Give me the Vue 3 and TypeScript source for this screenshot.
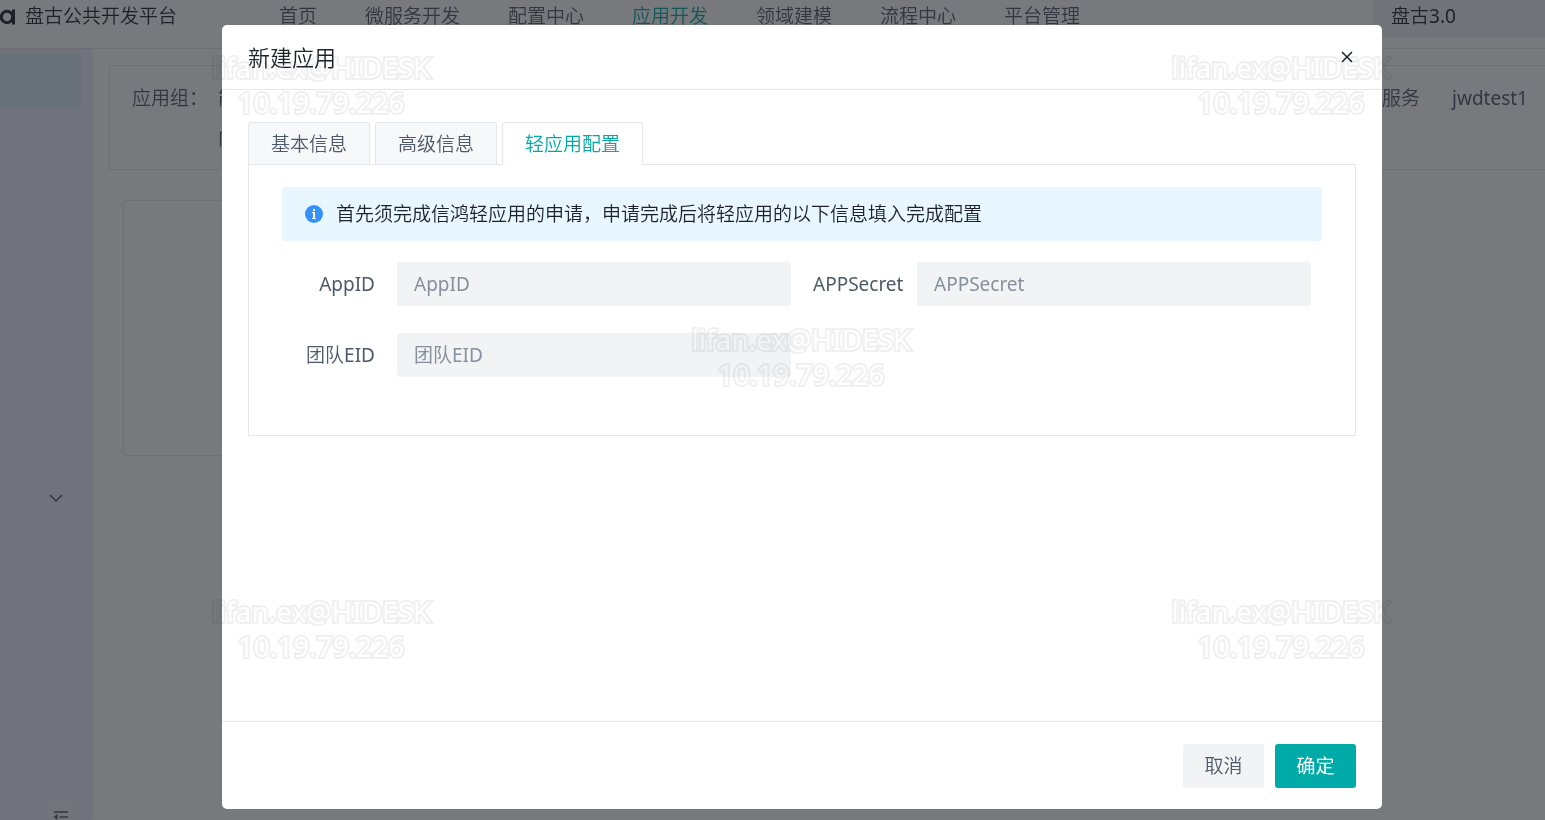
<script setup lang="ts">
import { ref } from 'vue'

const menus = ['首页', '微服务开发', '配置中心', '应用开发', '领域建模', '流程中心', '平台管理']
const activeMenu = ref('应用开发')

const tabs = ['基本信息', '高级信息', '轻应用配置']
const activeTab = ref('轻应用配置')

const fields = [
  { id: 'app-id', han: '', latin: 'AppID' },
  { id: 'app-secret', han: '', latin: 'APPSecret' },
  { id: 'team-eid', han: '团队', latin: 'EID' },
]
const values = ref<Record<string, string>>({})

const stepX = 480
const stepY = 272
const marks = [
  { col: 0, row: 0 },
  { col: 2, row: 0 },
  { col: 1, row: 1 },
  { col: 0, row: 2 },
  { col: 2, row: 2 },
].map((m) => ({ left: `${201 + m.col * stepX}px`, top: `${50 + m.row * stepY}px` }))
</script>

<template>
  <div class="page">
    <header class="topbar">
      <svg class="logo" viewBox="0 0 16 18" aria-hidden="true">
        <circle cx="7" cy="9" r="5.700" />
        <path d="M13.500 1.500V16.500" />
      </svg>
      <span class="brand">盘古公共开发平台</span>
      <nav class="menu">
        <a v-for="m in menus" :key="m" href="#" :class="{ active: m === activeMenu }" @click.prevent="activeMenu = m">{{ m }}</a>
      </nav>
      <div class="version">盘古<span class="latin">3.0</span></div>
    </header>
    <div class="shell">
      <aside class="side">
        <div class="side-active"></div>
        <svg class="chevron" viewBox="0 0 28 16" aria-hidden="true"><path d="M2 2l12 12 12-12" /></svg>
        <button class="collapse" type="button" aria-label="收起">
          <svg viewBox="0 0 32 28" aria-hidden="true">
            <path d="M2 4h28M13 14h17M2 24h28" />
            <path class="solid" d="M1 14l8-6v12z" />
          </svg>
        </button>
      </aside>
      <main class="main">
        <section class="groups">
          <span class="group-label">应用组：</span>
          <div class="group-left">
            <span>能力</span>
            <span>内部</span>
          </div>
          <span class="group-right">服务</span>
          <span class="latin">jwdtest1</span>
        </section>
        <section class="card"></section>
      </main>
    </div>

    <div class="mask">
      <section class="dialog" role="dialog" aria-modal="true" aria-labelledby="dialog-title">
        <header class="dialog-head">
          <h2 id="dialog-title">新建应用</h2>
          <button class="close" type="button" aria-label="关闭">
            <svg viewBox="0 0 24 24" aria-hidden="true"><path d="M2 2l20 20M22 2L2 22" /></svg>
          </button>
        </header>
        <div class="dialog-body">
          <div class="tabs" role="tablist">
            <button
              v-for="t in tabs"
              :key="t"
              type="button"
              role="tab"
              class="tab"
              :class="{ active: t === activeTab }"
              :aria-selected="t === activeTab"
              @click="activeTab = t"
            >{{ t }}</button>
          </div>
          <div class="panel" role="tabpanel">
            <div class="notice">
              <svg viewBox="0 0 18 18" aria-hidden="true">
                <circle cx="9" cy="9" r="9" />
                <path d="M8 4h2v2H8zM7 7h3v6h1v1H7v-1h1V8H7z" />
              </svg>
              <span>首先须完成信鸿轻应用的申请，申请完成后将轻应用的以下信息填入完成配置</span>
            </div>
            <form class="form" @submit.prevent>
              <div v-for="f in fields" :key="f.id" class="field">
                <label :for="f.id">{{ f.han }}<span class="latin">{{ f.latin }}</span></label>
                <input :id="f.id" v-model="values[f.id]" type="text" :placeholder="f.han + f.latin" />
              </div>
            </form>
          </div>
        </div>
        <footer class="dialog-foot">
          <button class="btn" type="button">取消</button>
          <button class="btn primary" type="button">确定</button>
        </footer>
      </section>
    </div>

    <div class="watermarks" aria-hidden="true">
      <div v-for="(m, i) in marks" :key="i" class="mark" :style="m">
        <div>lifan.ex@HIDESK</div>
        <div>10.19.79.226</div>
      </div>
    </div>
  </div>
</template>

<style>
body {
  margin: 0;
}
</style>

<style scoped>
.page {
  position: relative;
  display: flex;
  flex-direction: column;
  min-height: 100vh;
  overflow: hidden;
  background: #fff;
  color: #4e5969;
  font-family: "Noto Sans", "Noto Sans CJK SC", sans-serif;
  font-size: 19px;
  font-weight: 350;
  line-height: 30px;
}
.page * {
  box-sizing: border-box;
}
button,
input {
  border: 0;
  padding: 0;
  font: inherit;
  color: inherit;
}
svg {
  fill: none;
  flex: none;
}
.latin {
  font-weight: 400;
}
.topbar {
  display: flex;
  align-items: flex-start;
  height: 49px;
  border-bottom: 1px solid #e5e6eb;
  line-height: 32px;
  white-space: nowrap;
}
.logo {
  width: 16px;
  height: 18px;
  margin-top: 8px;
  stroke: #1d2129;
  stroke-width: 3;
}
.brand {
  margin-left: 9px;
  color: #1d2129;
}
.menu {
  display: flex;
  gap: 48px;
  margin-left: 102px;
}
.menu a {
  color: #4e5969;
  text-decoration: none;
}
.menu a.active {
  color: #00aaa6;
}
.version {
  width: 172px;
  height: 37px;
  margin-left: auto;
  padding-left: 18px;
  background: #f0f1f3;
  color: #1d2129;
}
.shell {
  display: flex;
  flex: 1;
}
.side {
  display: flex;
  flex-direction: column;
  width: 92px;
  padding-top: 5px;
  background: #ebf0f9;
  box-shadow: 0 0 5px rgba(0, 0, 0, 0.08);
}
.side-active {
  width: 82px;
  height: 54px;
  border-radius: 0 2px 2px 0;
  background: #d8ebf2;
}
.chevron {
  width: 14px;
  height: 8px;
  margin: 386px 0 0 49px;
  stroke: #4e5969;
  stroke-width: 3;
}
.collapse {
  display: flex;
  justify-content: center;
  width: 32px;
  height: 19px;
  margin: auto 0 0 45px;
  padding-top: 9px;
  overflow: hidden;
  background: #eff2f8;
}
.collapse svg {
  width: 16px;
  height: 14px;
  stroke: #4e5969;
  stroke-width: 3;
}
.collapse .solid {
  fill: #4e5969;
  stroke: none;
}
.main {
  flex: 1;
  padding: 16px 0 0 17px;
}
.groups {
  display: flex;
  height: 105px;
  padding: 17px 17px 0 22px;
  border: 1px solid #e5e6eb;
  border-right: 0;
  white-space: nowrap;
}
.group-label {
  width: 86px;
}
.group-left {
  display: flex;
  flex-direction: column;
  gap: 10px;
}
.group-right {
  margin: 0 32px 0 auto;
}
.card {
  width: 30%;
  height: 256px;
  margin: 30px 0 0 14px;
  border: 1px solid #e5e6eb;
  border-radius: 3px;
}
.mask {
  position: absolute;
  inset: 0;
  display: flex;
  padding: 25px 163px 11px 222px;
  background: rgba(30, 32, 38, 0.6);
}
.dialog {
  display: flex;
  flex: 1;
  flex-direction: column;
  border-radius: 5px;
  background: #fff;
}
.dialog-head {
  display: flex;
  align-items: center;
  justify-content: space-between;
  height: 65px;
  padding: 0 26px;
  border-bottom: 1px solid #e5e6eb;
}
.dialog-head h2 {
  margin: 0;
  color: #1d2129;
  font-size: 22px;
  font-weight: 350;
}
.close {
  display: flex;
  align-items: center;
  justify-content: center;
  width: 18px;
  height: 18px;
  background: none;
}
.close svg {
  width: 12px;
  height: 12px;
  stroke: #1d2129;
  stroke-width: 3;
}
.dialog-body {
  flex: 1;
  padding: 32px 26px;
}
.tabs {
  position: relative;
  z-index: 1;
  display: flex;
  gap: 5px;
}
.tab {
  height: 43px;
  padding: 0 22px;
  border: 1px solid #e5e6eb;
  border-radius: 3px 3px 0 0;
  background: #f7f8fa;
}
.tab.active {
  border-bottom-color: #fff;
  background: #fff;
  color: #00aaa6;
}
.panel {
  margin-top: -1px;
  padding: 22px 33px 58px;
  border: 1px solid #e5e6eb;
}
.notice {
  display: flex;
  align-items: center;
  gap: 13px;
  min-height: 54px;
  padding: 0 23px;
  border-radius: 3px;
  background: #e8f6ff;
  color: #1d2129;
}
.notice svg {
  width: 18px;
  height: 18px;
}
.notice circle {
  fill: #3491fa;
}
.notice path {
  fill: #fff;
}
.form {
  display: grid;
  grid-template-columns: 1fr 1fr;
  row-gap: 27px;
  margin-top: 21px;
}
.field {
  display: flex;
  align-items: center;
  padding: 0 11px;
}
.field label {
  width: 82px;
  margin-right: 22px;
  text-align: right;
  white-space: nowrap;
}
.field input {
  flex: 1;
  min-width: 0;
  height: 44px;
  padding: 0 17px;
  border-radius: 3px;
  background: #f2f3f5;
  font-weight: 400;
}
.field input::placeholder {
  color: #86909c;
  opacity: 1;
}
.dialog-foot {
  display: flex;
  justify-content: flex-end;
  gap: 11px;
  padding: 22px 26px 21px;
  border-top: 1px solid #e5e6eb;
}
.btn {
  width: 81px;
  height: 44px;
  border-radius: 3px;
  background: #f2f3f5;
}
.btn.primary {
  background: #00aaa6;
  color: #fff;
  font-weight: 400;
}
.watermarks {
  position: absolute;
  inset: 0;
  pointer-events: none;
  mix-blend-mode: multiply;
}
.mark {
  position: absolute;
  width: 240px;
  color: #fff;
  font-size: 28px;
  font-weight: 400;
  line-height: 35px;
  text-align: center;
  white-space: nowrap;
  paint-order: stroke fill;
  stroke-linejoin: round;
  -webkit-text-stroke: 4px #f0f0f0;
}
</style>
